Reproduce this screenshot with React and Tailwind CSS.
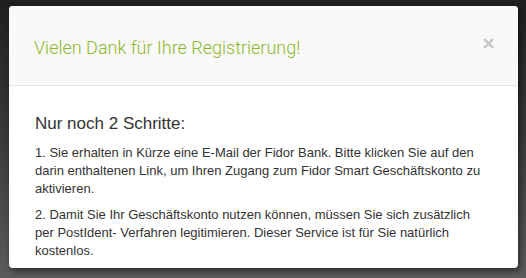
export default function App() {
  return (
    <div className="w-[526px] h-[278px] overflow-hidden bg-gradient-to-b from-[#1f1f1f] via-[#3a3a3a] to-[#5c5c5c] pt-[6px] pl-[9px]">
      <div className="w-[509px] h-[262px] bg-white rounded-[4px] overflow-hidden shadow-[2px_3px_6px_rgba(0,0,0,0.5)]">
        <div className="h-[80px] bg-[#f9f9f9] border-b border-[#e5e5e5] flex items-center justify-between pl-[25px] pr-[22px]">
          <h1 className="font-['Roboto',sans-serif] font-light text-[18px] text-[#8cb82b] pt-[4px]">
            Vielen Dank für Ihre Registrierung!
          </h1>
          <button className="text-[#c5c5c5] font-['DejaVu_Sans',sans-serif] font-bold text-[18px] leading-none -mt-[6px]">
            ×
          </button>
        </div>
        <div className="px-[26px] pt-[28px] font-['Liberation_Sans',Arial,sans-serif] text-[#333]">
          <h2 className="text-[17px] leading-[20px] mb-[10px]">Nur noch 2 Schritte:</h2>
          <p className="text-[13px] leading-[18px] mb-[8px]">
            1. Sie erhalten in Kürze eine E-Mail der Fidor Bank. Bitte klicken Sie auf den darin enthaltenen Link, um Ihren Zugang zum Fidor Smart Geschäftskonto zu aktivieren.
          </p>
          <p className="text-[13px] leading-[18px]">
            2. Damit Sie Ihr Geschäftskonto nutzen können, müssen Sie sich zusätzlich per PostIdent- Verfahren legitimieren. Dieser Service ist für Sie natürlich kostenlos.
          </p>
        </div>
      </div>
    </div>
  );
}
